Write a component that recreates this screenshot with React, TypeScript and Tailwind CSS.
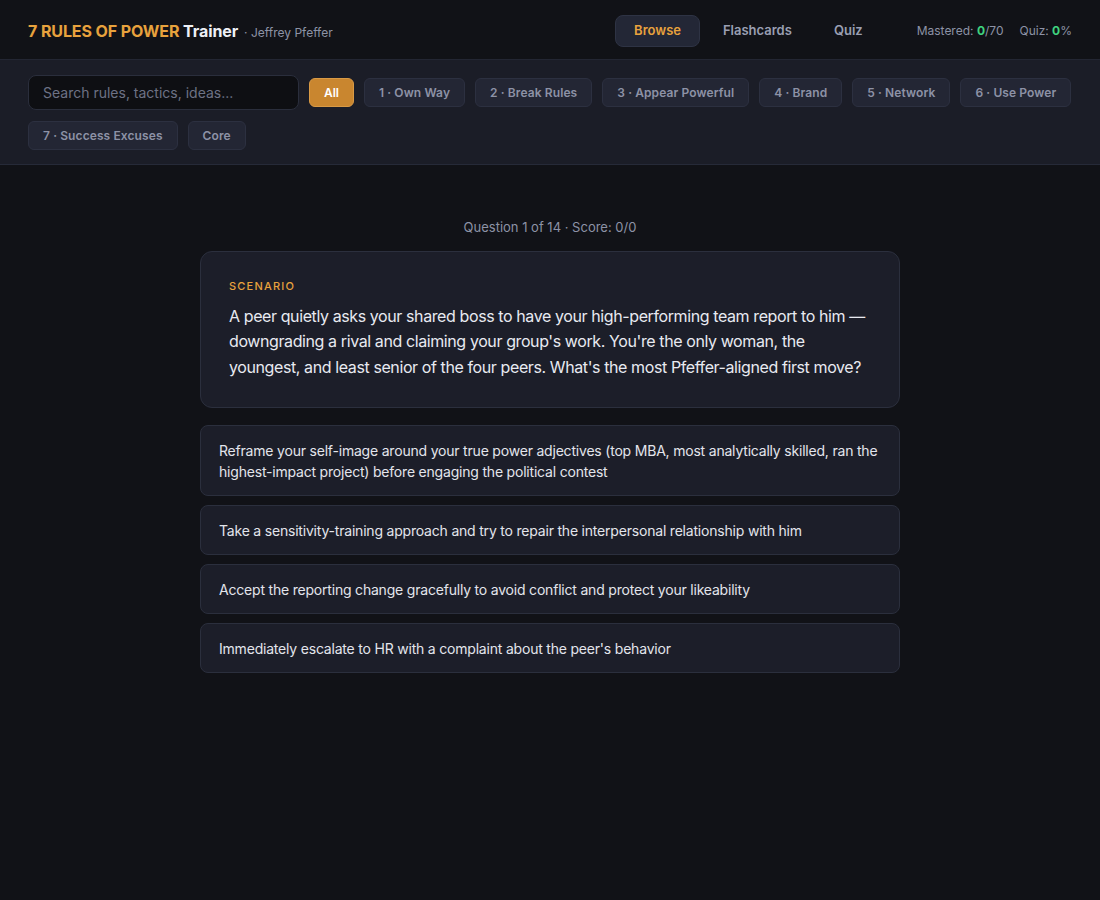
const chips = [
  '1 · Own Way',
  '2 · Break Rules',
  '3 · Appear Powerful',
  '4 · Brand',
  '5 · Network',
  '6 · Use Power',
  '7 · Success Excuses',
  'Core',
];

const options = [
  'Reframe your self-image around your true power adjectives (top MBA, most analytically skilled, ran the highest-impact project) before engaging the political contest',
  'Take a sensitivity-training approach and try to repair the interpersonal relationship with him',
  'Accept the reporting change gracefully to avoid conflict and protect your likeability',
  "Immediately escalate to HR with a complaint about the peer's behavior",
];

const App: React.FC = () => {
  return (
    <div className="min-h-[900px] bg-[#111217] font-['Inter','Noto_Sans',sans-serif] text-[#e6e8ef]">
      <header className="flex h-[60px] items-center border-b border-[#232633] px-7 pt-[2px]">
        <div className="flex items-baseline">
          <h1 className="text-[16px] font-bold tracking-[-0.1px]">
            <span className="text-[#e8a23d]">7 RULES OF POWER</span>{' '}
            <span className="text-[#eef0f6]">Trainer</span>
          </h1>
          <span className="ml-[6px] text-[12px] text-[#8d92a6]">· Jeffrey Pfeffer</span>
        </div>

        <nav className="ml-auto flex items-center gap-1">
          <button className="h-[32px] rounded-lg border border-[#2e3344] bg-[#232736] px-[18px] text-[13px] font-semibold text-[#e8a23d]">
            Browse
          </button>
          <button className="h-[32px] rounded-lg border border-transparent px-[18px] text-[13px] font-semibold text-[#9a9fb2]">
            Flashcards
          </button>
          <button className="h-[32px] rounded-lg border border-transparent px-[18px] text-[13px] font-semibold text-[#9a9fb2]">
            Quiz
          </button>
        </nav>

        <div className="ml-[35px] flex items-center gap-4 text-[12px] text-[#8d92a6]">
          <span>
            Mastered: <b className="font-bold text-[#3fd47f]">0</b>/70
          </span>
          <span>
            Quiz: <b className="font-bold text-[#3fd47f]">0</b>%
          </span>
        </div>
      </header>

      <div className="flex flex-wrap items-center gap-x-[10px] gap-y-[11px] border-b border-[#262a38] bg-[#1b1d27] px-7 pt-[15px] pb-[14px]">
        <input
          className="h-[35px] w-[271px] rounded-lg border border-[#2a2e3c] bg-[#0e0f13] px-[14px] text-[14px] text-[#e6e8ef] outline-none placeholder:text-[#6d7285]"
          placeholder="Search rules, tactics, ideas..."
        />
        <button className="h-[29px] rounded-md border border-[#d99a45] bg-[#c9862f] px-[14px] text-[12px] font-semibold text-white">
          All
        </button>
        {chips.map((c) => (
          <button
            key={c}
            className="h-[29px] rounded-md border border-[#2c3040] bg-[#232634] px-[14px] text-[12px] font-semibold tracking-[0.1px] text-[#8d92a6]"
          >
            {c}
          </button>
        ))}
      </div>

      <main className="mx-auto w-[700px] pt-[52px]">
        <p className="mb-[14px] text-center text-[13px] leading-5 text-[#8d92a6]">
          Question 1 of 14 · Score: 0/0
        </p>

        <section className="rounded-xl border border-[#2b2f3d] bg-[#1c1e29] px-7 pt-[26px] pb-[27px]">
          <div className="text-[11px] font-medium tracking-[1.2px] text-[#e8a23d]">SCENARIO</div>
          <p className="mt-[9px] text-[16px] leading-[25.5px] tracking-[-0.4px] text-[#e8eaf1]">
            A peer quietly asks your shared boss to have your high-performing team report to him —
            downgrading a rival and claiming your group's work. You're the only woman, the youngest,
            and least senior of the four peers. What's the most Pfeffer-aligned first move?
          </p>
        </section>

        <div className="mt-[17px] flex flex-col gap-[9px]">
          {options.map((o) => (
            <button
              key={o}
              className="rounded-lg border border-[#2b2f3d] bg-[#1c1e29] px-[18px] py-[13.5px] text-left text-[14px] leading-[21px] tracking-[-0.2px] text-[#e3e5ec]"
            >
              {o}
            </button>
          ))}
        </div>
      </main>
    </div>
  );
};

export default App;
